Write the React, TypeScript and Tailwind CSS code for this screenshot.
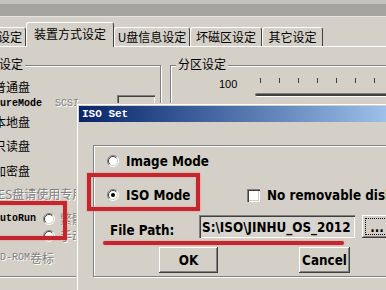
const cjk = "font-['Noto_Sans_CJK_SC',sans-serif] text-[12px] leading-[16px]";
const mono = "font-['Liberation_Mono',monospace] font-bold text-[10px] leading-[16px]";
const grayText = "text-[#808080] [text-shadow:1px_1px_0_#ffffff]";
const ui = "inline-block scale-y-[1.2] font-['DejaVu_Sans',sans-serif] font-bold text-[12px] leading-[16px]";

const raised =
  "bg-[#d4d0c8] shadow-[inset_-1px_-1px_#404040,inset_1px_1px_#ffffff,inset_-2px_-2px_#808080,inset_2px_2px_#d4d0c8]";
const sunken =
  "shadow-[inset_1px_1px_#808080,inset_2px_2px_#404040,inset_-1px_-1px_#ffffff,inset_-2px_-2px_#d4d0c8]";
const etched = "border border-[#808080] shadow-[1px_1px_0_#ffffff,inset_1px_1px_0_#ffffff]";
const tab =
  "flex items-center rounded-t-[3px] border-l border-t border-r border-l-white border-t-white border-r-[#404040] " + cjk;
const redMark = "border-[#c3272d] shadow-[0_0_2px_#e88a8a,inset_0_0_2px_#e88a8a]";

function Radio({ checked = false }: { checked?: boolean }) {
  return (
    <svg width="12" height="12" viewBox="0 0 12 12" className="shrink-0">
      <circle cx="6" cy="6" r="5" fill="#ffffff" />
      <path d="M2.1 9.9A5.5 5.5 0 0 1 9.9 2.1" fill="none" stroke="#808080" />
      <path d="M9.9 2.1A5.5 5.5 0 0 1 2.1 9.9" fill="none" stroke="#ffffff" />
      <path d="M2.8 9.2A4.5 4.5 0 0 1 9.2 2.8" fill="none" stroke="#404040" />
      <path d="M9.2 2.8A4.5 4.5 0 0 1 2.8 9.2" fill="none" stroke="#d4d0c8" />
      {checked && <circle cx="6" cy="6" r="2" fill="#000000" />}
    </svg>
  );
}

function BackWindow() {
  const ticks = [0, 1, 2, 3, 4, 5, 6, 7];
  return (
    <div className="flex flex-col">
      <div className="h-[4px] bg-[#c4c2be]" />
      <div className="h-[13px] border-b border-[#e6e4e0] bg-[#a6a4a0]" />

      {/* tabs */}
      <div className="flex h-[30px] items-end border-b border-white">
        <div className={`-ml-[40px] h-[19px] w-[66px] shrink-0 justify-end pr-[3px] ${tab}`}>设定</div>
        <div className={`relative z-10 -mb-px h-[25px] w-[88px] shrink-0 justify-center bg-[#d4d0c8] pb-[2px] ${tab}`}>
          装置方式设定
        </div>
        <div className={`h-[19px] w-[76px] shrink-0 justify-center ${tab}`}>U盘信息设定</div>
        <div className={`h-[19px] w-[72px] shrink-0 justify-center ${tab}`}>坏磁区设定</div>
        <div className={`h-[19px] w-[61px] shrink-0 justify-center ${tab}`}>其它设定</div>
      </div>

      <div className="flex">
        {/* left group */}
        <div className={`relative -ml-[50px] mt-[18px] h-[212px] w-[211px] shrink-0 ${etched}`}>
          <span className={`absolute -top-[10px] left-[48px] bg-[#d4d0c8] pr-[2px] ${cjk}`}>设定</span>
          <div className="flex flex-col">
            <div className={`mt-[13px] h-[16px] pl-[43px] ${cjk}`}>普通盘</div>
            <div className="mt-[1px] flex h-[16px] items-start pl-[31px]">
              <span className={mono}>SecureMode</span>
              <span className={`ml-[13px] ${mono} font-normal ${grayText}`}>SCSI</span>
              <div className={`-mt-[1px] ml-[38px] h-[22px] w-[38px] bg-[#d4d0c8] ${sunken}`} />
            </div>
            <div className={`mt-[2px] h-[16px] pl-[43px] ${cjk}`}>本地盘</div>
            <div className={`mt-[8px] h-[16px] pl-[43px] ${cjk}`}>只读盘</div>
            <div className={`mt-[9px] h-[16px] pl-[43px] ${cjk}`}>加密盘</div>
            <div className={`mt-[7px] h-[16px] whitespace-nowrap pl-[47px] ${cjk} ${grayText}`}>ES盘请使用专用工具</div>
            <div className="mt-[9px] flex h-[16px] items-center pl-[43px]">
              <span className={mono}>AutoRun</span>
              <span className="ml-[7px]">
                <Radio />
              </span>
              <span className={`ml-[5px] whitespace-nowrap ${cjk} ${grayText}`}>繁體中文</span>
            </div>
            <div className="mt-[1px] flex h-[16px] items-center pl-[92px]">
              <Radio />
              <span className={`ml-[5px] whitespace-nowrap ${cjk} ${grayText}`}>手动设定</span>
            </div>
            <div className="mt-[6px] flex h-[16px] items-center pl-[43px]">
              <span className={`${mono} font-normal ${grayText}`}>CD-ROM</span>
              <span className={`${cjk} ${grayText}`}>卷标</span>
            </div>
          </div>
        </div>

        {/* right group */}
        <div className={`relative ml-[9px] mt-[18px] h-[212px] w-[240px] shrink-0 ${etched}`}>
          <span className={`absolute -top-[10px] left-[5px] bg-[#d4d0c8] px-[2px] ${cjk}`}>分区设定</span>
          <div className="mt-[10px] flex">
            <span className="w-[84px] shrink-0 pl-[48px] font-['Liberation_Sans',sans-serif] text-[11px] leading-[16px]">
              100
            </span>
            <div className="flex flex-1 flex-col">
              <div className="ml-[5px] mt-[2px] flex h-[5px] gap-[18px]">
                {ticks.map((t) => (
                  <div key={t} className="h-[5px] w-px bg-[#404040]" />
                ))}
              </div>
              <div className="mt-[10px] h-[4px] rounded-l-[2px] border-t border-b border-t-[#808080] border-b-white bg-[#404040]" />
            </div>
          </div>
        </div>
      </div>
    </div>
  );
}

function IsoDialog() {
  return (
    <div className="absolute left-[76px] top-[103px] h-[200px] w-[330px] bg-[#d4d0c8] p-[3px] shadow-[inset_1px_1px_#d4d0c8,inset_2px_2px_#ffffff]">
      <div className="flex h-[16px] items-center bg-gradient-to-r from-[#0a246a] to-[#a6caf0] pl-[3px]">
        <span className="font-['Liberation_Mono',monospace] text-[11px] font-bold leading-[16px] text-white">ISO Set</span>
      </div>
      <div className="pl-[14px] pt-[23px]">
        <div className={`flex h-[132px] w-[300px] flex-col ${etched}`}>
          <div className="mt-[6px] flex h-[18px] items-center gap-[7px] pl-[13px]">
            <Radio />
            <span className={ui}>Image Mode</span>
          </div>
          <div className="mt-[16px] flex h-[18px] items-center pl-[13px]">
            <div className="flex w-[140px] shrink-0 items-center gap-[7px]">
              <Radio checked />
              <span className={ui}>ISO Mode</span>
            </div>
            <div className={`h-[13px] w-[13px] shrink-0 bg-white ${sunken}`} />
            <span className={`ml-[7px] whitespace-nowrap ${ui}`}>No removable disk</span>
          </div>
          <div className="mt-[11px] flex h-[23px] items-center pl-[16px]">
            <div className="w-[89px] shrink-0 pt-[3px]">
              <span className={ui}>File Path:</span>
            </div>
            <div className={`flex h-[23px] w-[156px] shrink-0 items-center bg-[#d8d5cf] pl-[3px] ${sunken}`}>
              <span className={ui}>{"S:\\ISO\\JINHU_OS_2012"}</span>
            </div>
            <div className={`ml-[7px] flex h-[23px] w-[30px] shrink-0 items-center p-[3px] ${raised}`}>
              <div className="flex h-full w-full items-center justify-center border border-dotted border-black">
                <span className={ui}>...</span>
              </div>
            </div>
          </div>
          <div className="mt-[9px] flex h-[26px] pl-[65px]">
            <div className={`flex h-[26px] w-[59px] shrink-0 items-center justify-center ${raised}`}>
              <span className={ui}>OK</span>
            </div>
            <div className={`ml-[81px] flex h-[26px] w-[51px] shrink-0 items-center justify-center ${raised}`}>
              <span className={ui}>Cancel</span>
            </div>
          </div>
        </div>
      </div>
    </div>
  );
}

export default function App() {
  return (
    <div className="relative h-[290px] w-[386px] overflow-hidden bg-[#d4d0c8] text-black">
      <BackWindow />
      <IsoDialog />
      {/* red annotations drawn over the screenshot */}
      <div className={`absolute left-[87px] top-[173px] h-[38px] w-[113px] border-4 ${redMark}`} />
      <div className={`absolute -left-[10px] top-[201px] h-[39px] w-[77px] border-4 ${redMark}`} />
      <div className="absolute left-[103px] top-[241px] h-[4px] w-[241px] rounded-full bg-[#c3272d] shadow-[0_0_2px_#e88a8a]" />
    </div>
  );
}
